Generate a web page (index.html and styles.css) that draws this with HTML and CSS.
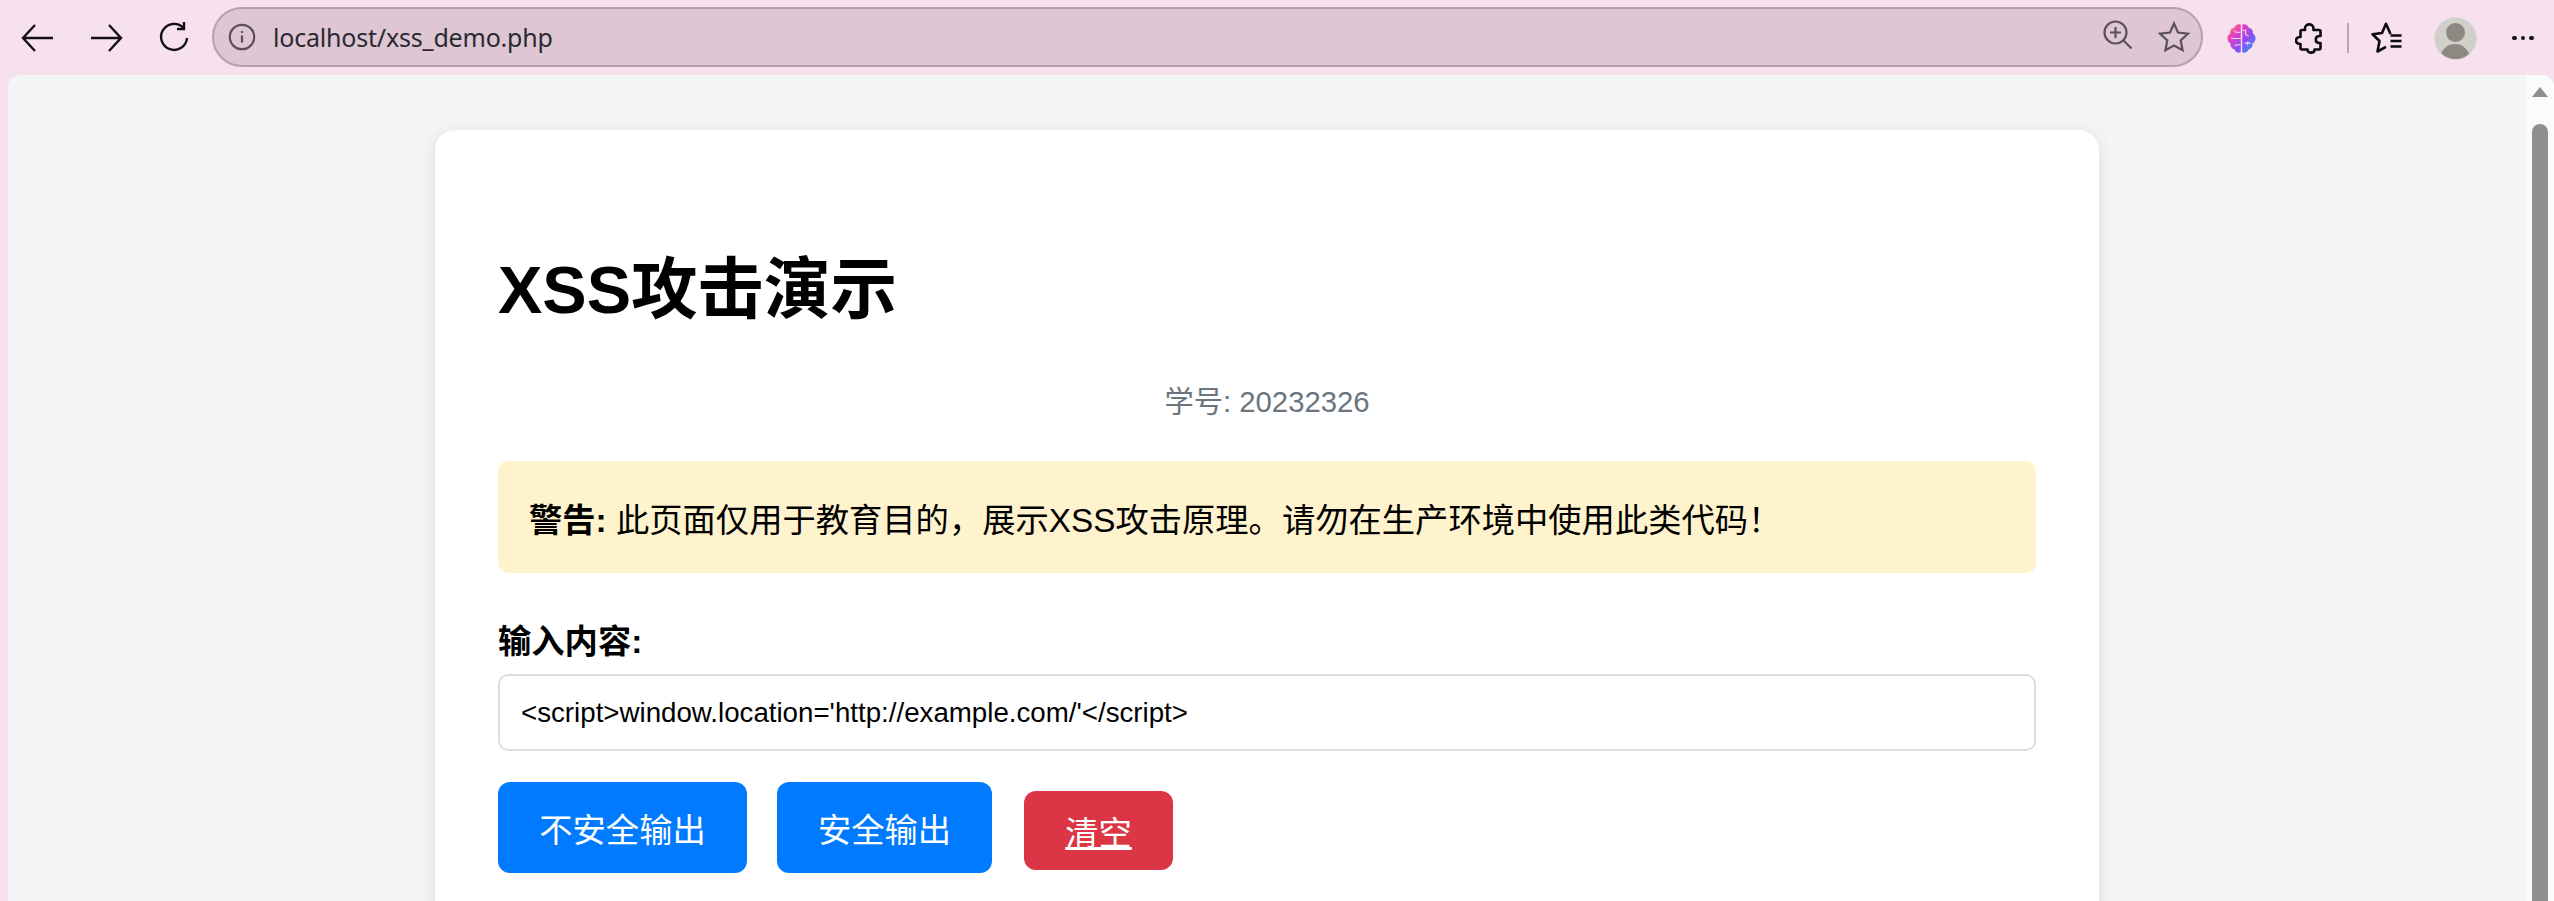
FILE: index.html
```html
<!DOCTYPE html>
<html lang="zh-CN">
<head>
<meta charset="utf-8">
<title>XSS攻击演示</title>
<link rel="stylesheet" href="styles.css">
</head>
<body>
<header class="toolbar">
  <div class="tool"><svg class="ico" viewBox="0 0 36 36"><path d="M33 18H4M15 5 3 18l12 13" class="ln"/></svg></div>
  <div class="tool"><svg class="ico" viewBox="0 0 36 36"><path d="M3 18h29M21 5l12 13-12 13" class="ln"/></svg></div>
  <div class="tool"><svg class="ico" viewBox="0 0 36 36"><path d="M27.5 8A13 13 0 1 0 31 18M28 2v7h-7" class="ln"/></svg></div>
  <div class="address">
    <svg class="info" viewBox="0 0 28 28"><circle cx="14" cy="14" r="12.2" class="dim"/><path d="M14 12.5v7M14 8v2" class="dim"/></svg>
    <span class="url">localhost/xss_demo.php</span>
    <span class="spacer"></span>
    <svg class="zoom" viewBox="0 0 30 30"><circle cx="12.5" cy="12.5" r="11" class="dim"/><path d="M12.5 7v11M7 12.5h11M20.500 20.500l8 8" class="dim"/></svg>
    <svg class="fav" viewBox="0 0 32 32"><path d="M16 2.500l4 9 10 1.200-7.300 6.700 1.900 9.800L16 24.500l-8.600 4.700 1.900-9.800L2 12.700l10-1.200z" class="dim"/></svg>
  </div>
  <div class="tool">
    <svg class="brain" viewBox="1 1 28 28">
      <defs><linearGradient id="bg" x1="0" y1="0" x2="1" y2="1"><stop offset="0" stop-color="#f9a01b"/><stop offset=".28" stop-color="#ee3fc0"/><stop offset=".62" stop-color="#8a4df2"/><stop offset="1" stop-color="#1fa8f7"/></linearGradient></defs>
      <path d="M14.300 1.500c-3-1-5.500.5-6.300 3-3 .5-4.500 3-3.800 5.500C2 11.500 1 14 1.500 16c.5 2 1.500 3 2.800 3.800-.3 2.700 1.300 5 3.700 5.500 1 3 3.800 4 6.300 3zM15.700 1.500c3-1 5.500.5 6.300 3 3 .5 4.500 3 3.800 5.500 2.200 1.500 3.200 4 2.700 6-.5 2-1.500 3-2.800 3.800.3 2.700-1.300 5-3.700 5.500-1 3-3.800 4-6.300 3z" fill="url(#bg)"/>
      <path d="M14 15H5M14 9H9.500L8 7.500M14 21h-4l-1.500 1.500M16 7h3v4l3 2M24 20l-3-1.500-3 1.500M21 18.500V22" class="brainln"/>
    </svg>
  </div>
  <div class="tool"><svg class="puzzle" viewBox="0 0 29 31"><path d="M10 5.500c0-5.500 8.500-5.500 8.500 0V7H24c.8 0 1.500.7 1.500 1.500V13h-1c-5 0-5 7 0 7h1v5c0 .8-.7 1.500-1.500 1.500h-4.500v.5c0 3.500-7 3.500-7 0v-.5H7C6.200 26.500 5.500 25.800 5.500 25v-4c-6 .5-6-7.500 0-7V8.500C5.500 7.700 6.200 7 7 7h3z" class="thick"/></svg></div>
  <div class="sep"></div>
  <div class="tool"><svg class="favlist" viewBox="0 0 32 32"><path d="M19.500 12 15 1.800 11 11 1.500 12.300 8.500 19l-2 10.500 8.500-4.700M19.500 13.500h11M19.500 19h11M19.500 24.500h11" class="thick"/></svg></div>
  <div class="tool">
    <div class="avatar"><span class="head"></span><span class="torso"></span></div>
  </div>
  <div class="tool last"><span class="dots"><i></i><i></i><i></i></span></div>
</header>
<main class="window">
  <div class="viewport">
    <section class="card">
      <h1 class="title">XSS攻击演示</h1>
      <p class="sid">学号: 20232326</p>
      <div class="warning"><strong>警告:</strong> 此页面仅用于教育目的，展示XSS攻击原理。请勿在生产环境中使用此类代码！</div>
      <label class="label" for="content">输入内容:</label>
      <input class="field" id="content" type="text" value="&lt;script&gt;window.location='http://example.com/'&lt;/script&gt;">
      <div class="actions">
        <button class="btn b1" type="button">不安全输出</button>
        <button class="btn b2" type="button">安全输出</button>
        <a class="clear" href="#">清空</a>
      </div>
    </section>
  </div>
  <aside class="scrollbar">
    <span class="arrow"></span>
    <span class="thumb"></span>
  </aside>
</main>
</body>
</html>
```

FILE: styles.css
```css
* { box-sizing: border-box; }
html, body { margin: 0; height: 901px; overflow: hidden; }
body {
  background: #f7e1ef;
  font-family: "Liberation Sans", "Noto Sans CJK SC", sans-serif;
  color: #000;
  display: flex;
  flex-direction: column;
}
.toolbar {
  height: 75px;
  flex: none;
  display: flex;
  align-items: center;
  padding: 1px 0 0 4px;
  overflow: hidden;
}
.tool {
  width: 68px;
  height: 60px;
  flex: none;
  display: flex;
  align-items: center;
  justify-content: center;
}
.last { margin-right: -3px; }
.ico { width: 36px; height: 36px; }
.ln { fill: none; stroke: #111; stroke-width: 2.400; }
.dim { fill: none; stroke: #5b5158; stroke-width: 2.200; }
.thick { fill: none; stroke: #0c0a0c; stroke-width: 2.600; stroke-linejoin: round; }
.brainln { fill: none; stroke: #f3d9ee; stroke-width: 1; }
.address {
  flex: 1;
  min-width: 0;
  height: 60px;
  margin: -2px 4px 0;
  display: flex;
  align-items: center;
  padding: 0 11px 0 14px;
  background: #dec6d2;
  border: 2px solid #b5a0ac;
  border-radius: 30px;
}
.info { width: 28px; height: 28px; flex: none; }
.url {
  margin-left: 17px;
  font: 25px "Noto Sans", "Open Sans", sans-serif;
  color: #2a2a35;
  letter-spacing: -0.2px;
}
.spacer { flex: 1; }
.zoom { width: 30px; height: 30px; margin: -4px 0 0 0; flex: none; }
.fav { width: 32px; height: 32px; margin-left: 25px; flex: none; }
.brain { width: 29px; height: 29px; }
.puzzle { width: 29px; height: 31px; }
.favlist { width: 32px; height: 32px; }
.sep { width: 2px; height: 30px; margin: 0 4px; background: #b9a6b2; flex: none; }
.avatar {
  width: 43px;
  height: 43px;
  border-radius: 50%;
  background: #d0cfc9;
  border: 1px solid #dbdad5;
  overflow: hidden;
  display: flex;
  flex-direction: column;
  align-items: center;
  padding-top: 5px;
}
.head { width: 19px; height: 19px; border-radius: 50%; background: #8d8882; flex: none; }
.torso { width: 30px; height: 30px; margin-top: 2px; border-radius: 50%; background: #8d8882; flex: none; }
.dots { display: flex; gap: 4px; }
.dots i { width: 4.500px; height: 4.500px; border-radius: 50%; background: #111; }
.window {
  flex: 1;
  min-height: 0;
  margin-left: 8px;
  display: flex;
  background: #f5f5f5;
  border-radius: 12px 12px 0 0;
  overflow: hidden;
}
.viewport {
  flex: 1;
  min-width: 0;
  display: flex;
  justify-content: center;
  align-items: flex-start;
  padding-top: 55px;
  overflow: hidden;
}
.card {
  width: 1664px;
  flex: none;
  height: 860px;
  padding: 0 63px;
  background: #fff;
  border-radius: 20px;
  box-shadow: 0 3px 17px rgba(0, 0, 0, .1);
}
.title {
  margin: 120px 0 0;
  font-size: 66.500px;
  line-height: 80px;
  font-weight: 700;
}
.sid {
  margin: 55px 0 0;
  text-align: center;
  font-size: 29.300px;
  line-height: 34px;
  color: #6c757d;
}
.warning {
  margin-top: 42px;
  height: 112px;
  padding: 0 31px;
  display: flex;
  align-items: center;
  white-space: pre;
  background: #fff3cd;
  border-radius: 10px;
  font-size: 33.300px;
}
.label {
  display: block;
  margin-top: 49px;
  font-size: 33.300px;
  line-height: 40px;
  font-weight: 700;
}
.field {
  display: block;
  width: 100%;
  height: 77px;
  margin-top: 12px;
  padding: 0 21px;
  border: 2px solid #ddd;
  border-radius: 10px;
  font: 27.700px "Liberation Sans", "Noto Sans CJK SC", sans-serif;
  color: #000;
  background: #fff;
}
.actions {
  display: flex;
  align-items: flex-start;
  margin-top: 31px;
}
.btn {
  height: 91px;
  border: 0;
  border-radius: 12px;
  background: #007bff;
  color: #fff;
  font: 33.300px "Liberation Sans", "Noto Sans CJK SC", sans-serif;
  padding: 0;
}
.b1 { width: 249px; }
.b2 { width: 215px; margin-left: 30px; }
.clear {
  width: 149px;
  height: 79px;
  margin: 9px 0 0 32px;
  display: flex;
  align-items: center;
  justify-content: center;
  background: #dc3545;
  color: #fff;
  border-radius: 12px;
  font-size: 33.300px;
  text-decoration: underline;
}
.scrollbar {
  width: 28px;
  flex: none;
  background: #fbfbfb;
  display: flex;
  flex-direction: column;
  align-items: center;
}
.arrow {
  margin-top: 12px;
  border-left: 8px solid transparent;
  border-right: 8px solid transparent;
  border-bottom: 10px solid #8f8f8f;
}
.thumb {
  width: 16px;
  flex: 1;
  margin-top: 27px;
  border-radius: 8px 8px 0 0;
  background: #8f8f8f;
}
```
